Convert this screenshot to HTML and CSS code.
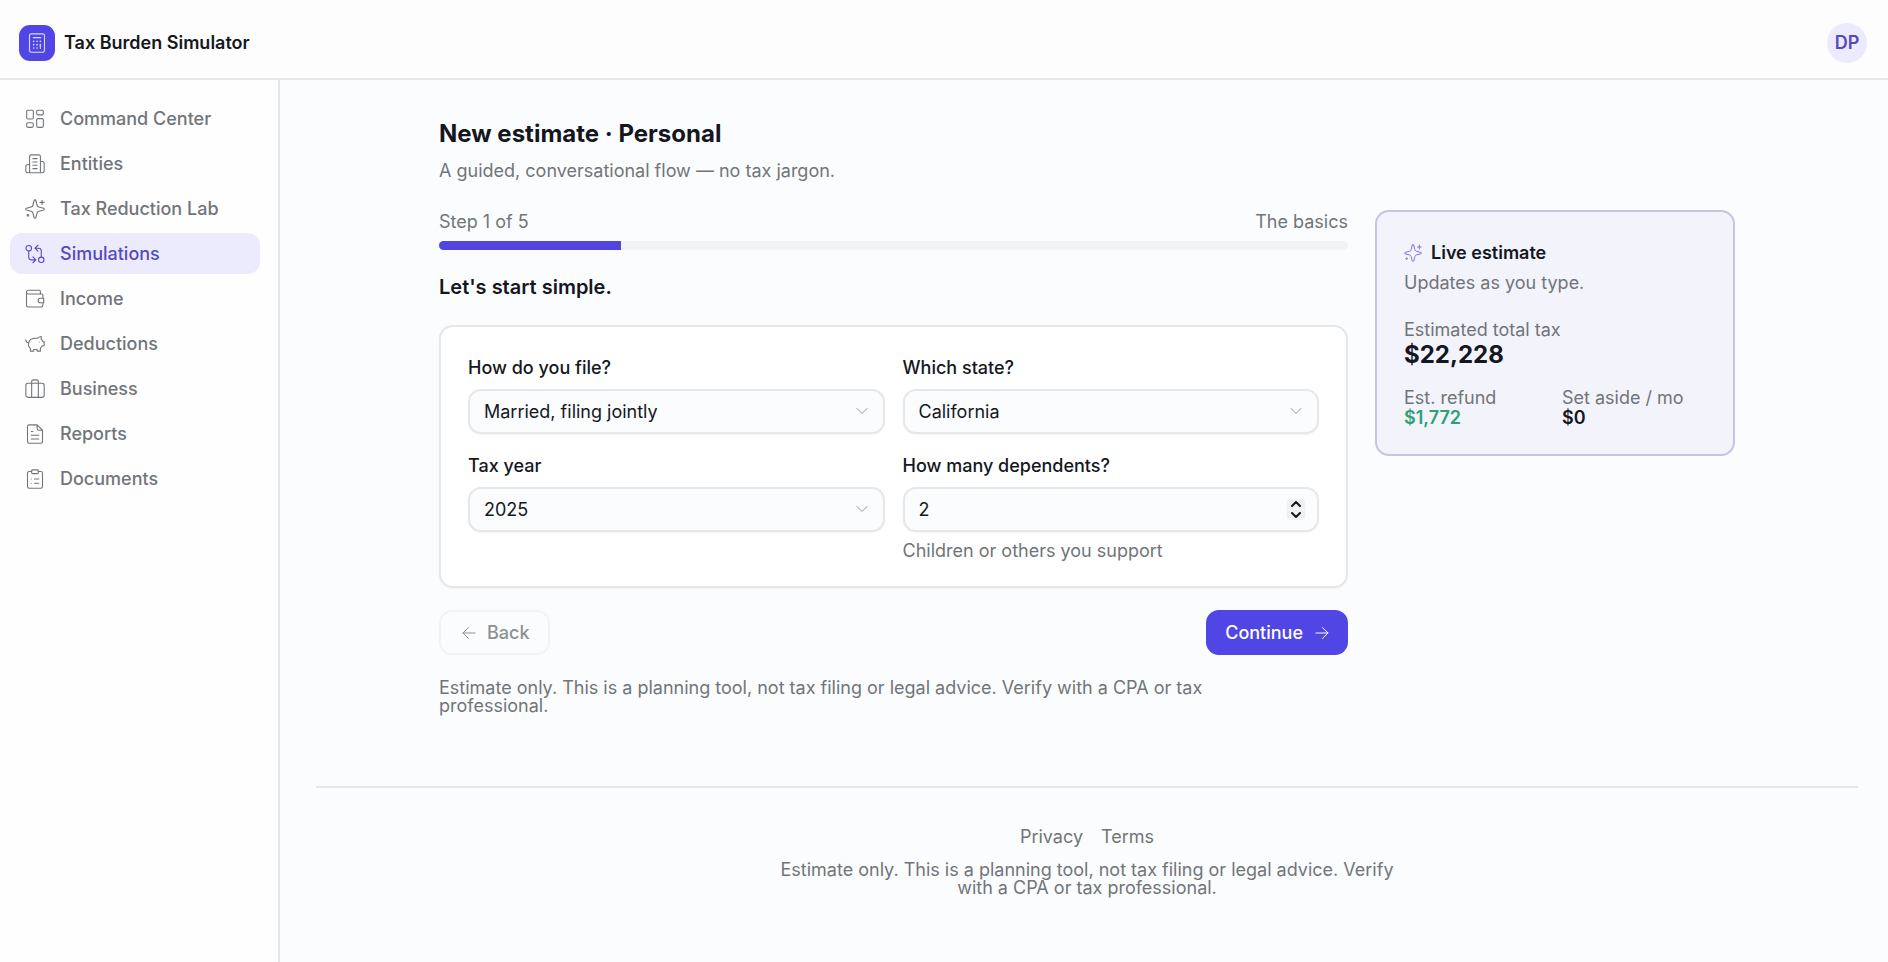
FILE: index.html
```html
<!DOCTYPE html>
<html lang="en">
<head>
<meta charset="utf-8">
<meta name="viewport" content="width=device-width, initial-scale=1">
<title>Tax Burden Simulator</title>
<link rel="stylesheet" href="styles.css">
</head>
<body>
<header class="topbar">
  <div class="brand">
    <span class="brand-mark">
      <svg class="icon" viewBox="0 0 24 24" aria-hidden="true"><rect x="3" y="1" width="18" height="22" rx="2"/><path d="M7.500 5.500h9"/><path class="dots" d="M8 10v.01M12 10v.01M16 10v.01M8 14v.01M12 14v.01M16 14v.01M8 18v.01M12 18v.01"/><path d="M16 14.500v4"/></svg>
    </span>
    <span>Tax Burden Simulator</span>
  </div>
  <button class="avatar" type="button">DP</button>
</header>
<div class="shell">
  <nav class="sidebar" aria-label="Main">
    <a class="nav-item" href="#"><svg class="icon" viewBox="0 0 24 24" aria-hidden="true"><rect x="2" y="1.500" width="8" height="10.500" rx="1.500"/><rect x="14" y="1.500" width="8" height="5.500" rx="1.500"/><rect x="2" y="16.500" width="8" height="5.500" rx="1.500"/><rect x="14" y="11.500" width="8" height="10.500" rx="1.500"/></svg>Command Center</a>
    <a class="nav-item" href="#"><svg class="icon" viewBox="0 0 24 24" aria-hidden="true"><path d="M5.500 22.500V3a2 2 0 0 1 2-2h9a2 2 0 0 1 2 2v19.500M5.500 12.500h-2a2.500 2.500 0 0 0-2.500 2.500v5.500a2 2 0 0 0 2 2h18a2 2 0 0 0 2-2V11.500a2.500 2.500 0 0 0-2.500-2.500h-2M9.500 5.500h5M9.500 9.500h5M9.500 13.500h5M9.500 17.500h5"/></svg>Entities</a>
    <a class="nav-item" href="#"><svg class="icon" viewBox="0 0 24 24" aria-hidden="true"><path d="M12 1c.5 0 .9.300 1 .800l1.500 5.700a3 3 0 0 0 2.200 2.200l5.700 1.500c1 .3 1 1.600 0 1.900l-5.700 1.500a3 3 0 0 0-2.200 2.200L13 22.500c-.3.900-1.700.9-2 0l-1.500-5.700a3 3 0 0 0-2.200-2.200l-5.700-1.500c-1-.3-1-1.600 0-1.900l5.700-1.500a3 3 0 0 0 2.200-2.200L11 1.800c.1-.5.500-.8 1-.8ZM20.500 1.500v5M18 4h5"/><circle cx="3.500" cy="19.500" r="1"/></svg>Tax Reduction Lab</a>
    <a class="nav-item nav-item-active" href="#" aria-current="page"><svg class="icon" viewBox="0 0 24 24" aria-hidden="true"><circle cx="4.500" cy="5" r="3.300"/><circle cx="19.500" cy="19" r="3.300"/><path d="M4.500 8.300V16a3 3 0 0 0 3 3H12M9.500 15.500 13 19l-3.500 3.500M19.500 15.700V8a3 3 0 0 0-3-3H12M15.500 1.500 12 5l3.500 3.500"/></svg>Simulations</a>
    <a class="nav-item" href="#"><svg class="icon" viewBox="0 0 24 24" aria-hidden="true"><path d="M18.500 6V3a1.500 1.500 0 0 0-1.500-1.500H4a2.200 2.200 0 0 0 0 4.500h16a1.500 1.500 0 0 1 1.500 1.500V11M1.800 4v15.500a2 2 0 0 0 2 2h15.700a2 2 0 0 0 2-2V16.500M22.500 11h-4a2.700 2.700 0 0 0 0 5.500h4Z"/></svg>Income</a>
    <a class="nav-item" href="#"><svg class="icon" viewBox="0 0 24 24" aria-hidden="true"><path d="M1 7c0 2 1.200 3.400 3.400 3.500C5.400 6.500 8.500 5 12 5h3.500c1-1.300 2.500-2 4-2v3.500c1 .7 1.600 1.600 2 2.800h1.500v4.700h-2c-.6 1.200-1.500 2-2.500 2.700V20.500h-4V18.500h-4v2h-4v-3.300c-2-1.500-2.800-4-2.100-6.700M17 9.500v.01"/></svg>Deductions</a>
    <a class="nav-item" href="#"><svg class="icon" viewBox="0 0 24 24" aria-hidden="true"><rect x="1" y="5" width="22" height="17" rx="2.500"/><path d="M8 22V3a2 2 0 0 1 2-2h4a2 2 0 0 1 2 2v19"/></svg>Business</a>
    <a class="nav-item" href="#"><svg class="icon" viewBox="0 0 24 24" aria-hidden="true"><path d="M14.500 1H5a2 2 0 0 0-2 2v18a2 2 0 0 0 2 2h14a2 2 0 0 0 2-2V7.500ZM14.500 1v4.500a2 2 0 0 0 2 2H21M7.500 9h2M7.500 13.500h9M7.500 18h9"/></svg>Reports</a>
    <a class="nav-item" href="#"><svg class="icon" viewBox="0 0 24 24" aria-hidden="true"><path d="M8 3H5a2 2 0 0 0-2 2v16a2 2 0 0 0 2 2h14a2 2 0 0 0 2-2V5a2 2 0 0 0-2-2h-3M7.500 12v.01M11.500 12h5M7.500 17v.01M11.500 17h5"/><rect x="8" y="1" width="8" height="4.500" rx="1"/></svg>Documents</a>
  </nav>
  <main class="main">
    <div class="page">
      <h1 class="title">New estimate · Personal</h1>
      <p class="muted">A guided, conversational flow — no tax jargon.</p>
      <div class="columns">
        <form class="wizard">
          <div class="progress-head"><span>Step 1 of 5</span><span>The basics</span></div>
          <div class="track"><div class="track-fill" style="width:20%"></div></div>
          <h2 class="subtitle">Let's start simple.</h2>
          <div class="card">
            <div class="field">
              <label for="filing">How do you file?</label>
              <div class="control"><select id="filing"><option>Married, filing jointly</option></select><svg class="chevron" viewBox="0 0 12 12" aria-hidden="true"><path d="m1 3.500 5 5 5-5"/></svg></div>
            </div>
            <div class="field">
              <label for="state">Which state?</label>
              <div class="control"><select id="state"><option>California</option></select><svg class="chevron" viewBox="0 0 12 12" aria-hidden="true"><path d="m1 3.500 5 5 5-5"/></svg></div>
            </div>
            <div class="field">
              <label for="year">Tax year</label>
              <div class="control"><select id="year"><option>2025</option></select><svg class="chevron" viewBox="0 0 12 12" aria-hidden="true"><path d="m1 3.500 5 5 5-5"/></svg></div>
            </div>
            <div class="field">
              <label for="dependents">How many dependents?</label>
              <div class="control"><input id="dependents" type="number" value="2" min="0"><span class="stepper"><button type="button" aria-label="Increase"><svg viewBox="0 0 10 6" aria-hidden="true"><path d="m1 5 4-4 4 4"/></svg></button><button type="button" aria-label="Decrease"><svg viewBox="0 0 10 6" aria-hidden="true"><path d="m1 1 4 4 4-4"/></svg></button></span></div>
              <p class="hint">Children or others you support</p>
            </div>
          </div>
          <div class="actions">
            <button class="btn btn-back" type="button" disabled><svg class="arrow" viewBox="0 0 14 14" aria-hidden="true"><path d="M13 7H1M6.500 1.500 1 7l5.500 5.500"/></svg>Back</button>
            <button class="btn btn-next" type="button">Continue<svg class="arrow" viewBox="0 0 14 14" aria-hidden="true"><path d="M1 7h12M7.500 1.500 13 7l-5.500 5.500"/></svg></button>
          </div>
          <p class="notice">Estimate only. This is a planning tool, not tax filing or legal advice. Verify with a CPA or tax professional.</p>
        </form>
        <aside class="live">
          <h2 class="live-title"><svg class="icon" viewBox="0 0 24 24" aria-hidden="true"><path d="M12 1c.5 0 .9.300 1 .800l1.500 5.700a3 3 0 0 0 2.200 2.200l5.700 1.500c1 .3 1 1.600 0 1.900l-5.700 1.500a3 3 0 0 0-2.200 2.200L13 22.500c-.3.900-1.700.9-2 0l-1.500-5.700a3 3 0 0 0-2.200-2.200l-5.700-1.500c-1-.3-1-1.600 0-1.900l5.700-1.500a3 3 0 0 0 2.200-2.200L11 1.800c.1-.5.500-.8 1-.8ZM20.500 1.500v5M18 4h5"/><circle cx="3.500" cy="19.500" r="1"/></svg>Live estimate</h2>
          <p class="live-sub">Updates as you type.</p>
          <dl class="stats">
            <div class="stat stat-wide"><dt>Estimated total tax</dt><dd class="total">$22,228</dd></div>
            <div class="stat"><dt>Est. refund</dt><dd class="positive">$1,772</dd></div>
            <div class="stat"><dt>Set aside / mo</dt><dd>$0</dd></div>
          </dl>
        </aside>
      </div>
    </div>
    <footer class="footer">
      <div class="links"><a href="#">Privacy</a><a href="#">Terms</a></div>
      <p class="footer-note">Estimate only. This is a planning tool, not tax filing or legal advice. Verify with a CPA or tax professional.</p>
    </footer>
  </main>
</div>
</body>
</html>
```
FILE: styles.css
```css
:root {
  --ink: #15171f;
  --muted: #717579;
  --line: #e5e7e9;
  --canvas: #fbfcfe;
  --primary: #4f46e5;
  --primary-ink: #5548c2;
  --tint: #ecebfd;
}
* { box-sizing: border-box; }
body {
  margin: 0;
  min-height: 100vh;
  display: flex;
  flex-direction: column;
  background: var(--canvas);
  color: var(--ink);
  font: 400 18px/18px Inter, "Liberation Sans", sans-serif;
}
h1, h2, p, dl, dd { margin: 0; }
button, input, select { font: inherit; color: inherit; }
a { color: inherit; text-decoration: none; }
svg { fill: none; stroke: currentColor; stroke-linecap: round; stroke-linejoin: round; flex: none; }
.icon { width: 20px; height: 20px; stroke-width: 1.3; }
.dots { stroke-width: 2; }

.topbar {
  display: flex;
  align-items: center;
  justify-content: space-between;
  height: 80px;
  padding: 8px 21px 0 19px;
  border-bottom: 2px solid var(--line);
  background: #fdfdfe;
}
.brand { display: flex; align-items: center; gap: 9px; line-height: 20px; font-weight: 600; }
.brand-mark {
  display: grid;
  place-items: center;
  width: 36px;
  height: 36px;
  border-radius: 11px;
  background: var(--primary);
  color: #dcdafb;
}
.avatar {
  width: 40px;
  height: 40px;
  padding: 0;
  border: 0;
  border-radius: 50%;
  background: var(--tint);
  color: var(--primary-ink);
  line-height: 20px;
  font-weight: 600;
}

.shell { flex: 1; display: grid; grid-template-columns: 280px 1fr; }
.sidebar {
  display: flex;
  flex-direction: column;
  gap: 4px;
  padding: 18px 18px 18px 10px;
  border-right: 2px solid var(--line);
  background: #fefefe;
}
.nav-item {
  display: flex;
  align-items: center;
  gap: 15px;
  height: 41px;
  padding: 0 15px;
  border-radius: 12px;
  color: var(--muted);
  font-weight: 500;
}
.nav-item-active { background: var(--tint); color: var(--primary-ink); }

.main { padding: 40px 30px 0 36px; }
.page { max-width: 1296px; margin: 0 auto; }
.title { font-size: 24px; line-height: 28px; font-weight: 700; }
.muted { margin-top: 14px; color: var(--muted); }
.columns {
  display: grid;
  grid-template-columns: 1fr 360px;
  gap: 27px;
  align-items: start;
  margin-top: 30px;
}
.progress-head { display: flex; justify-content: space-between; padding-top: 3px; color: var(--muted); }
.track { height: 9px; margin-top: 10px; border-radius: 5px; overflow: hidden; background: #f2f3f5; }
.track-fill { height: 100%; background: #5145e2; }
.subtitle { margin-top: 25px; font-size: 20px; line-height: 24px; font-weight: 600; }
.card {
  display: grid;
  grid-template-columns: 1fr 1fr;
  gap: 22px 18px;
  margin-top: 26px;
  padding: 31px 27px 26px;
  border: 2px solid var(--line);
  border-radius: 14px;
  background: #fefffe;
  box-shadow: 0 1px 2px #0000000a;
}
.field { display: flex; flex-direction: column; }
.field label { line-height: 20px; font-weight: 500; }
.control { position: relative; margin-top: 11px; }
.control select, .control input {
  display: block;
  width: 100%;
  height: 45px;
  padding: 0 14px;
  border: 2px solid var(--line);
  border-radius: 13px;
  background: var(--canvas);
  appearance: none;
  line-height: 24px;
  box-shadow: 0 1px 2px #0000000a;
}
.control input { appearance: textfield; }
.control input::-webkit-inner-spin-button { appearance: none; }
.chevron { position: absolute; right: 17px; top: 16px; width: 12px; height: 12px; color: #909498; }
.stepper {
  position: absolute;
  right: 14px;
  top: 12px;
  display: grid;
  grid-template-rows: 1fr 1fr;
  gap: 1px;
  width: 18px;
  height: 21px;
  border-radius: 4px;
  overflow: hidden;
}
.stepper button { display: grid; place-items: center; padding: 0; border: 0; background: #f0f0f1; }
.stepper svg { width: 10px; height: 6px; stroke-width: 2; }
.hint { margin-top: 10px; color: var(--muted); }

.actions { display: flex; justify-content: space-between; margin-top: 22px; }
.btn {
  display: flex;
  align-items: center;
  gap: 12px;
  height: 45px;
  border-radius: 13px;
  font-weight: 500;
}
.arrow { width: 14px; height: 14px; }
.btn-back { gap: 11px; padding: 0 18px 0 21px; border: 2px solid #f2f3f4; background: transparent; color: #8d9093; }
.btn-next { padding: 0 19px; border: 0; background: var(--primary); color: #fff; }
.notice { max-width: 810px; margin-top: 24px; color: var(--muted); }

.live {
  padding: 32px 27px 26px;
  border: 2px solid #c6c2e8;
  border-radius: 14px;
  background: #f3f3fc;
}
.live-title { display: flex; align-items: center; gap: 9px; font-size: 18px; line-height: 18px; font-weight: 600; }
.live-title .icon { width: 18px; height: 18px; color: #7b6fdc; }
.live-sub { margin-top: 12px; color: var(--muted); }
.stats { display: grid; grid-template-columns: 1fr 1fr; gap: 18px 14px; margin-top: 28px; }
.stat-wide { grid-column: 1 / -1; }
.stat dt { line-height: 20px; color: var(--muted); }
.stat dd { line-height: 20px; font-weight: 600; }
.stat .total { font-size: 24px; line-height: 30px; font-weight: 700; }
.stat .positive { color: #2f9f78; }

.footer { margin-top: 71px; padding: 40px 0; border-top: 2px solid var(--line); text-align: center; color: var(--muted); }
.links { display: flex; justify-content: center; gap: 18px; }
.footer-note { max-width: 640px; margin: 15px auto 0; }
```
